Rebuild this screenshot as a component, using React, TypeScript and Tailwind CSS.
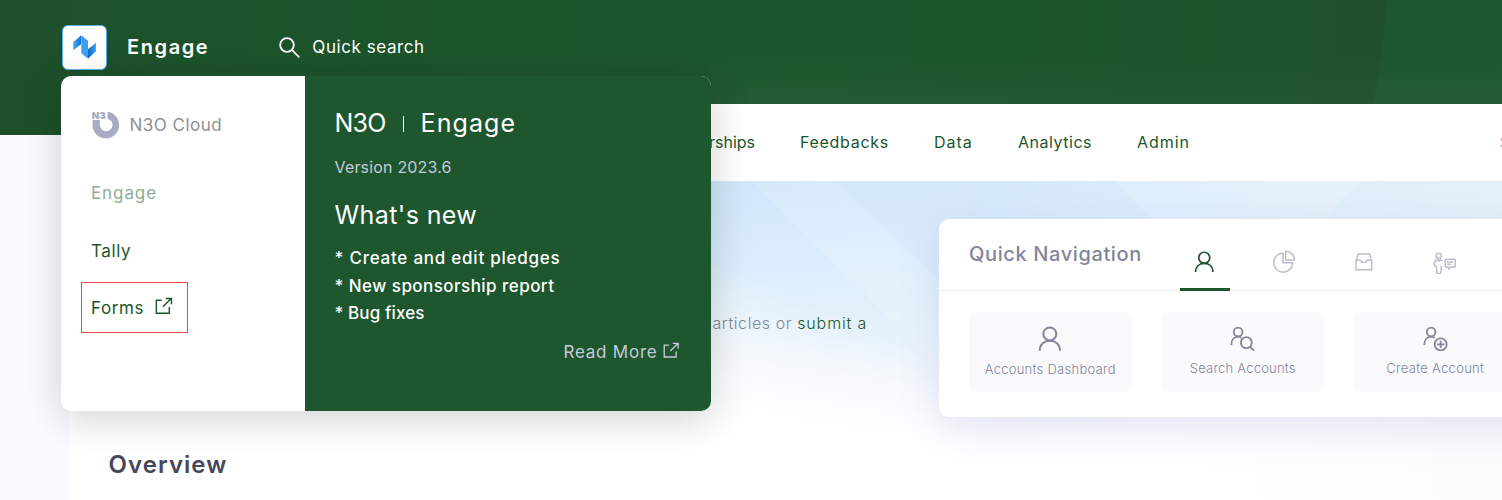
import type { ReactNode } from "react";

function ExternalLink({ className }: { className: string }) {
  return (
    <svg viewBox="315 112 54 52" className={className} fill="none" stroke="currentColor" strokeWidth="4.4">
      <path d="M335 122H319V161H358V142M339 141L364 116M347 116.500H364.500V134" />
    </svg>
  );
}

function AppLogo() {
  return (
    <svg viewBox="98 107 70 72" className="h-6 w-[23.300px]">
      <defs>
        <linearGradient id="fold-left" x1="0" x2="1">
          <stop offset="0.2" stopColor="#3a9ff5" />
          <stop offset="1" stopColor="#0f6fd0" />
        </linearGradient>
        <linearGradient id="fold-right" x1="0" x2="1">
          <stop offset="0" stopColor="#0a68c8" />
          <stop offset="0.9" stopColor="#3a9ff5" />
        </linearGradient>
      </defs>
      <path d="M99 128L123 108V134L99 153Z" fill="url(#fold-left)" />
      <path d="M143 150L167 130V156L143 178Z" fill="url(#fold-right)" />
      <path d="M123 108V122L143 138V178L123 161ZM123 108L143 124V140L123 124Z" fill="#3a9ff5" />
    </svg>
  );
}

function CloudLogo() {
  return (
    <svg viewBox="126 65 83 84" className="size-7" fill="#a9abc3">
      <path d="M127 92V107A40 40 0 1 0 172 67.300V88A19 19 0 1 1 149 107V92Z" />
      <text x="125" y="88" fontSize="28" fontWeight="900" textLength="42" lengthAdjust="spacingAndGlyphs" className="font-['Inter',sans-serif]">
        N3
      </text>
    </svg>
  );
}

function PersonIcon({ className }: { className: string }) {
  return (
    <svg viewBox="325 346 71 76" className={className} fill="none" stroke="currentColor" strokeWidth="6">
      <circle cx="360.500" cy="370" r="19.500" />
      <path d="M330 420C330 400 344 390 360.500 390S391 400 391 420" />
    </svg>
  );
}

function PersonSearchIcon() {
  return (
    <svg viewBox="92 348 75 76" className="h-[25.300px] w-[25px]" fill="none" stroke="currentColor" strokeWidth="5.500">
      <circle cx="116.500" cy="366" r="13" />
      <path d="M96 405C96 389 105 380 116.500 380Q122 380 126 383" />
      <circle cx="141" cy="398" r="16.500" />
      <path d="M152 410L164 422" />
    </svg>
  );
}

function PersonAddIcon() {
  return (
    <svg viewBox="671 348 75 76" className="h-[25.300px] w-[25px]" fill="none" stroke="currentColor" strokeWidth="5.500">
      <circle cx="695.500" cy="366" r="13" />
      <path d="M675 405C675 389 684 380 695.500 380Q701 380 706 384" />
      <circle cx="724" cy="403" r="18" />
      <path d="M724 392V414M713 403H735" />
    </svg>
  );
}

function PieIcon() {
  return (
    <svg viewBox="219 119 68 69" className="h-[23px] w-[22.700px]" fill="none" stroke="currentColor" strokeWidth="4.500">
      <path d="M249 128.500A28.500 28.500 0 1 0 278 157H249Z" />
      <path d="M257 123V149H283.500A26.500 26.500 0 0 0 257 123Z" />
    </svg>
  );
}

function InboxIcon() {
  return (
    <svg viewBox="467 128 53 54" className="h-[18px] w-[17.700px]" fill="none" stroke="currentColor" strokeWidth="4.500">
      <path d="M470 150L477 131H510L517 150V178H470Z" />
      <path d="M470 150H483L488 156H499L504 150H517" />
    </svg>
  );
}

function PersonChatIcon() {
  return (
    <svg viewBox="698 125 70 68" className="h-[22.700px] w-[23.300px]" fill="none" stroke="currentColor" strokeWidth="4.600" strokeLinejoin="round">
      <circle cx="715.500" cy="136.500" r="8" />
      <path d="M708 167L701.500 165V159C702 152 706 149 711 148L715.500 153L720 148L727 151" />
      <path d="M707.500 166L710.500 190H721L723.500 166" />
      <path d="M737 147H762Q765 147 765 150V167Q765 170 762 170H753L745 176V170H737Q734 170 734 167V150Q734 147 737 147Z" />
      <path d="M740 155H759M740 162H753" />
    </svg>
  );
}

function Tile({ icon, label, className }: { icon: ReactNode; label: string; className: string }) {
  return (
    <div className={`flex h-20 w-[162.500px] shrink-0 flex-col items-center rounded-md bg-[#fafafc] pt-[13.500px] text-[#83859c] ${className}`}>
      {icon}
      <span className="mt-2 text-[13px] leading-[18px] font-light whitespace-nowrap">{label}</span>
    </div>
  );
}

function AppMenu() {
  return (
    <div className="absolute top-[76px] left-[61px] flex h-[335px] w-[650px] overflow-hidden rounded-[10px] bg-white shadow-[0_8px_40px_rgba(0,0,0,0.18)]">
      <div className="w-[244px] pt-[35px] pl-5 text-[17px] text-[#1d562c]">
        <div className="flex h-7 items-center gap-2.5 pl-[10.500px] text-[#8f9092]">
          <CloudLogo />
          <span className="pt-0.5 tracking-[0.500px]">N3O Cloud</span>
        </div>
        <div className="mt-[29px] flex flex-col items-start gap-1.5">
          <div className="flex h-[51px] items-center pl-2.5 tracking-[0.900px] text-[#8fac96]">Engage</div>
          <div className="flex h-[51px] items-center pt-0.5 pl-2.5 tracking-[0.600px]">Tally</div>
          <div className="flex h-[51px] w-[107px] items-center border border-[#f5464a] pt-0.5 pl-[9px] tracking-[0.600px]">
            Forms
            <ExternalLink className="mb-1.5 ml-[10.500px] h-[17.300px] w-[18px]" />
          </div>
        </div>
      </div>
      <div className="w-[406px] bg-[#1e562d] pt-7 pr-8 pl-[29.500px] text-white">
        <div className="flex h-10 items-center text-[25px]">
          <span className="w-[52px] tracking-[-0.800px]">N3O</span>
          <span className="mx-4 h-4 w-px bg-white" />
          <span className="pl-px tracking-[1.100px]">Engage</span>
        </div>
        <div className="mt-[11px] h-6 text-base tracking-[0.180px] text-[#c3cbdd]">Version 2023.6</div>
        <div className="mt-[18px] h-9 text-[25px] leading-9 tracking-[0.400px]">What's new</div>
        <div className="mt-3 text-[17px] leading-[27.500px] font-medium">
          <div className="tracking-[0.760px]">* Create and edit pledges</div>
          <div className="tracking-[0.450px]">* New sponsorship report</div>
          <div className="tracking-[0.100px]">* Bug fixes</div>
        </div>
        <div className="mt-[11.500px] flex h-7 items-center justify-end text-[17px] tracking-[0.770px] text-[#c3cbdd]">
          Read More
          <ExternalLink className="mb-1.5 ml-[5px] h-4 w-[16.500px]" />
        </div>
      </div>
    </div>
  );
}

function QuickNavigation() {
  return (
    <div className="mt-[38px] h-[198px] w-[700px] shrink-0 rounded-[10px] bg-white shadow-[0_10px_40px_rgba(80,100,190,0.17)]">
      <div className="flex h-[72px] border-b border-[#ededf0] pl-[30px]">
        <span className="w-[211px] pt-[21px] text-xl leading-7 font-medium tracking-[0.620px] whitespace-nowrap text-[#83859c]">
          Quick Navigation
        </span>
        <div className="flex gap-[30px] text-[#bcbdd0]">
          <div className="flex h-[72px] w-[50px] justify-center border-b-3 border-[#1d562c] pt-[31.500px] pr-0.5 text-[#1d562c]">
            <PersonIcon className="h-[21.500px] w-[20.500px]" />
          </div>
          <div className="flex w-[50px] justify-center pt-[30.500px] pr-0.5"><PieIcon /></div>
          <div className="flex w-[50px] justify-center pt-[33.500px] pr-0.5"><InboxIcon /></div>
          <div className="flex w-[50px] justify-center pt-[32.500px] pr-[1.500px]"><PersonChatIcon /></div>
        </div>
      </div>
      <div className="flex gap-[30px] overflow-hidden pt-[21px] pl-[30px]">
        <Tile className="tracking-[0.270px]" icon={<PersonIcon className="mb-px h-[25.300px] w-[23.700px]" />} label="Accounts Dashboard" />
        <Tile className="tracking-[0.220px]" icon={<PersonSearchIcon />} label="Search Accounts" />
        <Tile className="tracking-[0.300px]" icon={<PersonAddIcon />} label="Create Account" />
      </div>
    </div>
  );
}

export default function App() {
  return (
    <div className="relative h-[500px] w-full overflow-hidden bg-[#fafaff] font-['Inter','Liberation_Sans',sans-serif] text-[#1d562c]">
      <svg className="absolute top-0 left-0 h-[135px] w-[1502px]" viewBox="0 0 1502 135">
        <defs>
          <linearGradient id="bar" x1="0" x2="1">
            <stop offset="0" stopColor="#1d502a" />
            <stop offset="0.12" stopColor="#1c532a" />
            <stop offset="0.5" stopColor="#1d562c" />
            <stop offset="0.85" stopColor="#1c532a" />
            <stop offset="0.92" stopColor="#1e502b" />
          </linearGradient>
          <linearGradient id="bar-foot" x1="0" x2="0" y1="0" y2="1">
            <stop offset="0.4" stopColor="#fff" stopOpacity="0" />
            <stop offset="0.77" stopColor="#fff" stopOpacity="0.03" />
          </linearGradient>
        </defs>
        <rect width="1502" height="135" fill="url(#bar)" />
        <path d="M1386 0H1502V135H1366Q1384 60 1386 0Z" fill="#1e572e" />
        <rect x="711" width="791" height="135" fill="url(#bar-foot)" />
      </svg>
      <header className="relative flex h-[104px] items-center pb-2.5 pl-[62px] text-white">
        <div className="flex size-[45px] items-center justify-center rounded-md border border-[#5dabf4] bg-white">
          <AppLogo />
        </div>
        <span className="ml-5 w-[152px] text-xl font-semibold tracking-[1.600px]">Engage</span>
        <svg viewBox="716 113 64 64" className="mt-0.5 size-[21.300px]" fill="none" stroke="currentColor" strokeWidth="5.500">
          <circle cx="740" cy="137" r="20.500" />
          <path d="M754.500 151.500L777 174" />
        </svg>
        <span className="ml-3 pt-0.5 text-[17px] tracking-[0.580px]">Quick search</span>
      </header>
      <main className="relative ml-[69px] h-[396px] w-[1433px]">
        <nav className="flex h-[77px] items-center gap-[45px] overflow-hidden bg-white pb-0.5 text-base whitespace-nowrap">
          <span className="flex w-[686px] shrink-0 justify-end">Sponsorships</span>
          <span className="w-[89px] shrink-0 tracking-[0.700px]">Feedbacks</span>
          <span className="w-[39px] shrink-0 tracking-[1px]">Data</span>
          <span className="w-[74px] shrink-0 tracking-[0.520px]">Analytics</span>
          <span className="w-[318px] shrink-0 tracking-[0.960px]">Admin</span>
          <span className="text-[#83859c]">S</span>
        </nav>
        <div className="relative h-[319px] overflow-hidden bg-[linear-gradient(177deg,#d1e4f4_0px,#d2e8fb_50px,#dceefc_125px,#e6f1fb_195px,#f3f7fc_250px,#ffffff_310px)]">
          <svg className="absolute top-0 left-0 h-[319px] w-[1433px]" viewBox="69 181 1433 319">
            <defs>
              <linearGradient id="fade" x1="0" x2="0" y1="0" y2="1">
                <stop offset="0" stopColor="#fff" stopOpacity="0.12" />
                <stop offset="1" stopColor="#fff" stopOpacity="0.2" />
              </linearGradient>
              <linearGradient id="clear-left" gradientUnits="userSpaceOnUse" x1="760" y1="470" x2="830" y2="310">
                <stop offset="0" stopColor="#fff" />
                <stop offset="0.35" stopColor="#fff" stopOpacity="0.8" />
                <stop offset="1" stopColor="#fff" stopOpacity="0" />
              </linearGradient>
              <linearGradient id="clear-right" x1="0" x2="1">
                <stop offset="0" stopColor="#fff" stopOpacity="0" />
                <stop offset="1" stopColor="#f6f6f6" stopOpacity="0.35" />
              </linearGradient>
            </defs>
            <rect x="900" y="181" width="602" height="319" fill="url(#clear-right)" />
            <path d="M752 181H980V408Z" fill="url(#fade)" />
            <path d="M835 181H980V320Z" fill="#c9e0f5" opacity="0.2" />
            <path d="M1115 181H1360L1322 219H1152Z" fill="#fff" opacity="0.16" />
            <path d="M1237 219L1265 181H1502V219Z" fill="#fff" opacity="0.08" />
            <path d="M995 417L1055 490L1110 417Z" fill="#fff" opacity="0.16" />
            <path d="M1360 417L1420 488L1485 417Z" fill="#fff" opacity="0.22" />
            <rect x="69" y="181" width="1433" height="319" fill="url(#clear-left)" />
          </svg>
          <div className="relative flex h-[236px]">
            <p className="w-[870px] shrink-0 pt-[130px] pl-[643.500px] text-base leading-6 font-light tracking-[0.580px] whitespace-nowrap text-[#83859c]">
              articles or <span className="tracking-[0.870px] text-[#1d562c]">submit a</span>
            </p>
            <QuickNavigation />
          </div>
          <h2 className="relative mt-[30px] pl-[39.500px] text-2xl leading-9 font-semibold tracking-[1.050px] text-[#47475c]">Overview</h2>
        </div>
      </main>
      <AppMenu />
    </div>
  );
}
